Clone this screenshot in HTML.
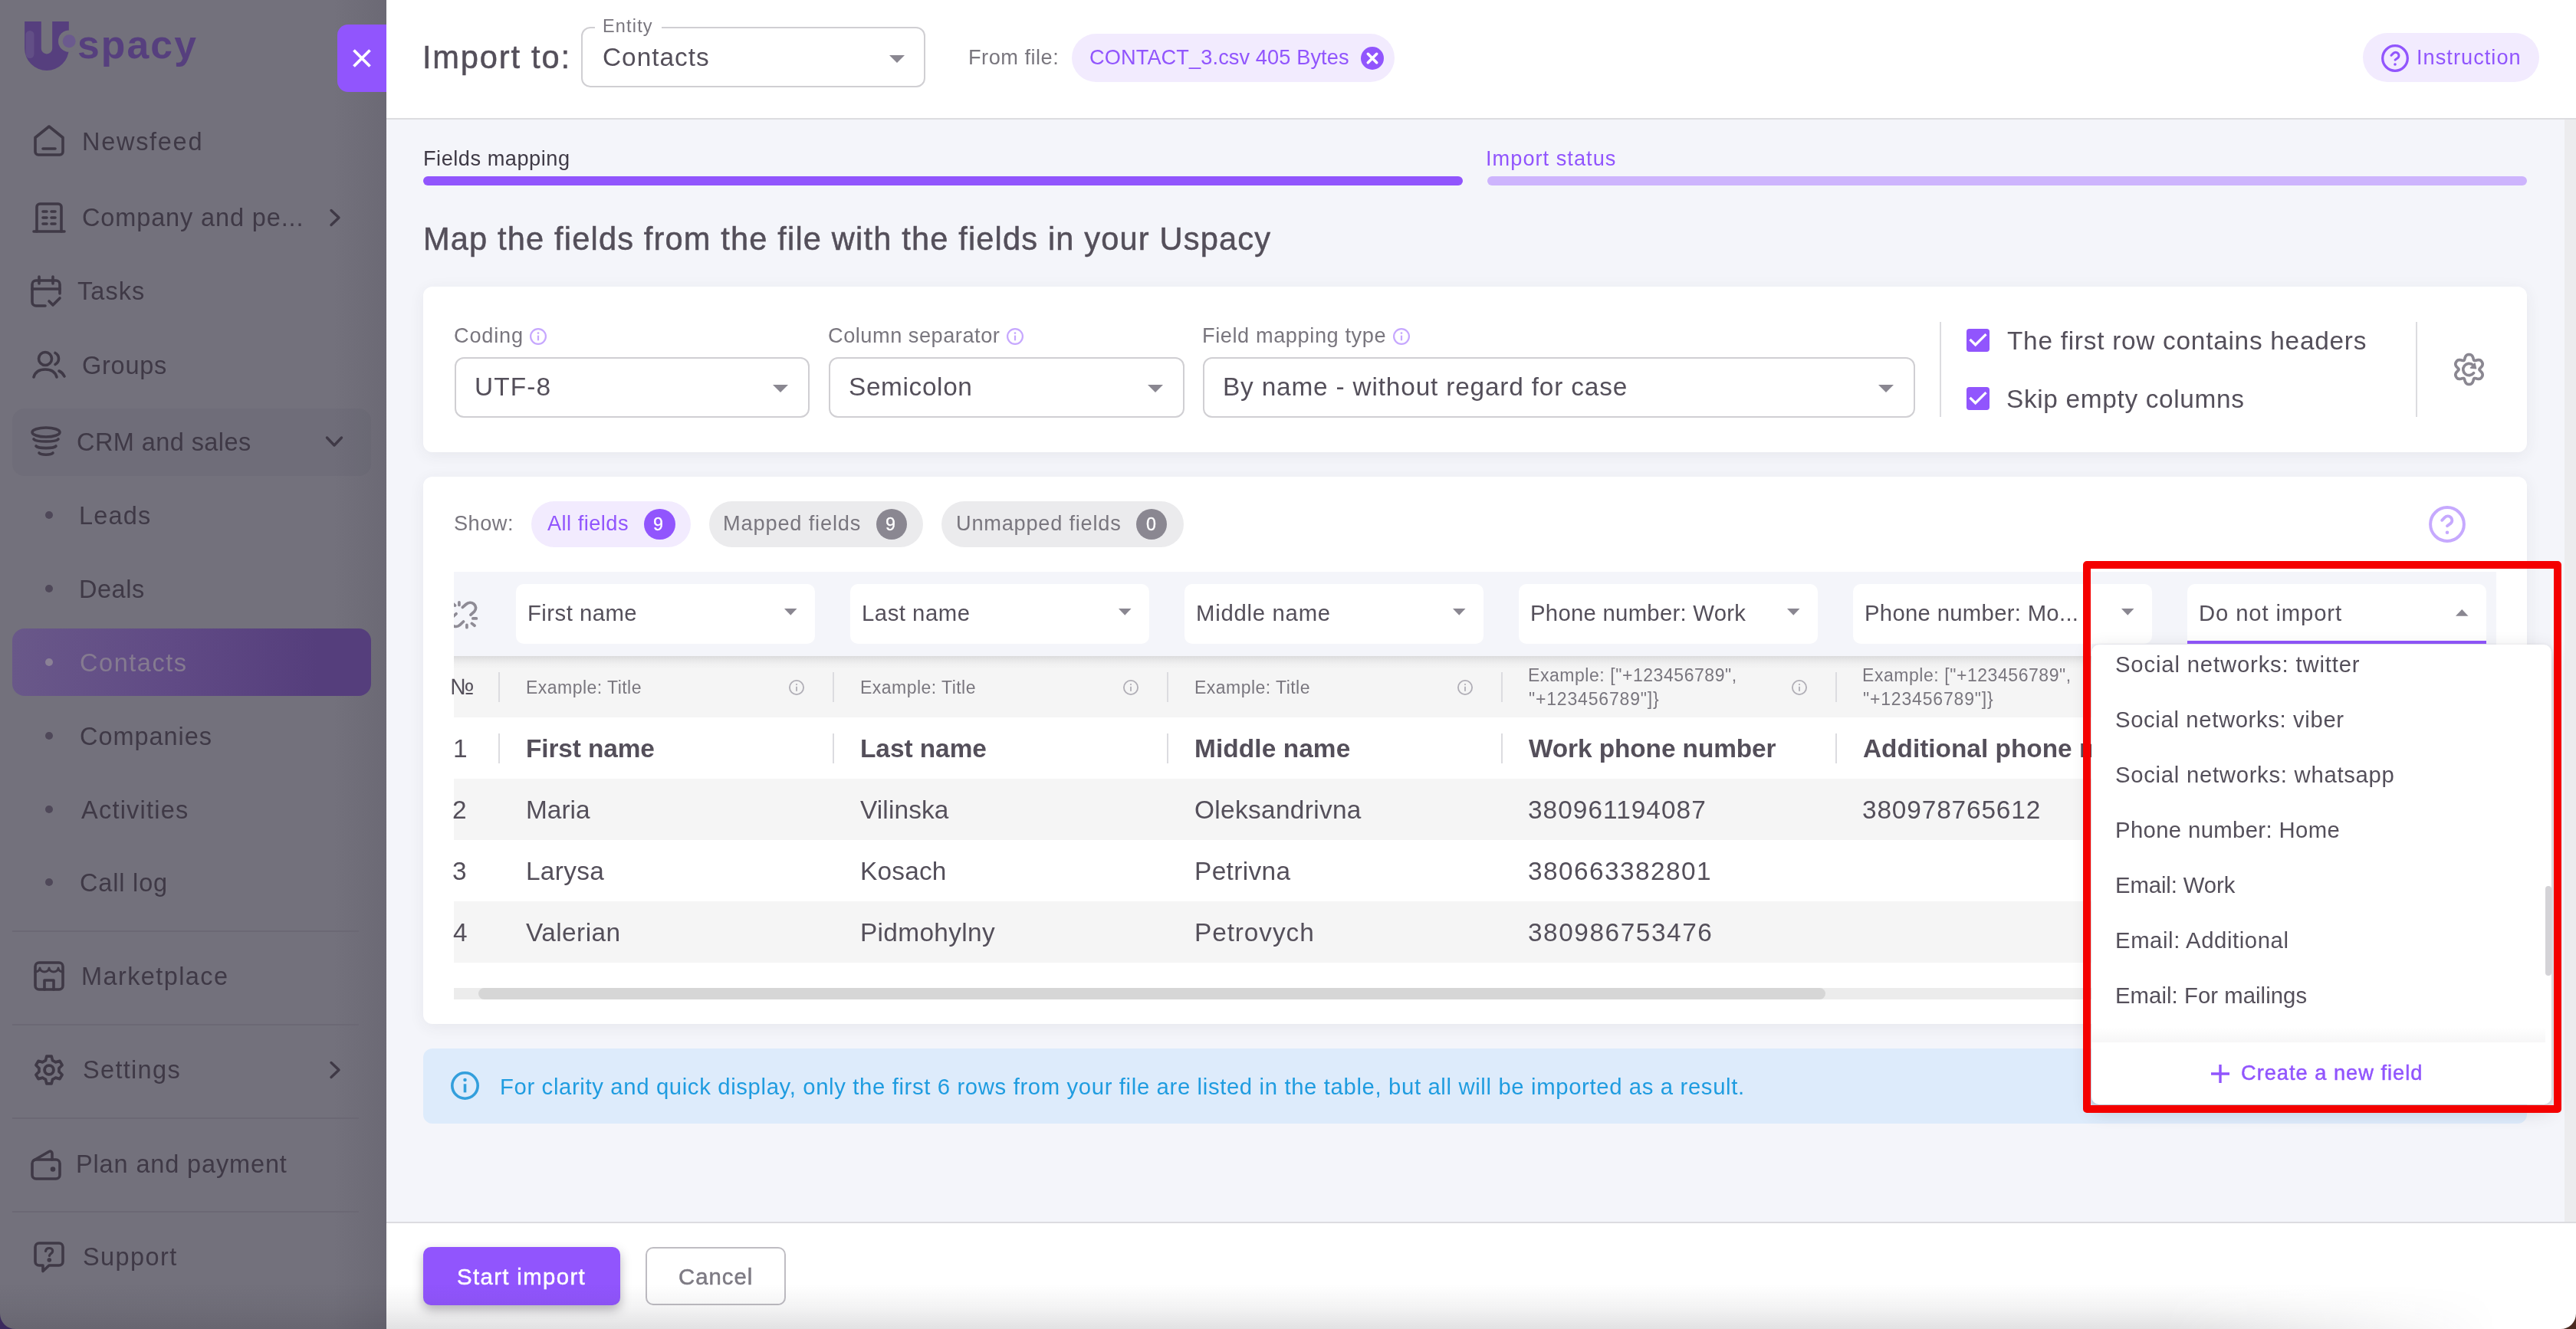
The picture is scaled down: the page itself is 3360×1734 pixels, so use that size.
<!DOCTYPE html>
<html lang="en"><head><meta charset="utf-8"><title>Uspacy import</title><style>
html,body{margin:0;padding:0}
body{width:3360px;height:1734px;position:relative;overflow:hidden;background:#f4f5fa;font-family:"Liberation Sans",sans-serif;}
.a{position:absolute}
.t{position:absolute;white-space:nowrap;line-height:1;will-change:transform}
svg{overflow:visible}
</style></head><body>
<div class="a" style="left:504px;top:0px;width:2856px;height:154px;background:#fff;"></div>
<div class="a" style="left:504px;top:153.5px;width:2856px;height:2px;background:#dcdce0;"></div>
<div class="a" style="left:504px;top:1594px;width:2856px;height:140px;background:#fff;"></div>
<div class="a" style="left:504px;top:1593.5px;width:2856px;height:2px;background:#dcdce0;"></div>
<div class="a" style="left:3345px;top:155.5px;width:15px;height:1438px;background:#ececee;"></div>
<span class="t" id="h_import" style="left:551.16px;top:54.00px;font-size:41.6px;color:#544f5a;-webkit-text-stroke:0.5px #544f5a;letter-spacing:1.812px;">Import to:</span>
<div class="a" style="left:758px;top:35px;width:449px;height:79px;box-sizing:border-box;border:2px solid #d0cfd3;border-radius:12px"></div>
<div class="a" style="left:775.6px;top:33px;width:87.6px;height:6px;background:#fff;"></div>
<span class="t" id="h_entity" style="left:785.71px;top:23.00px;font-size:23.5px;color:#79767e;letter-spacing:1.166px;">Entity</span>
<span class="t" id="h_contacts" style="left:785.94px;top:58.00px;font-size:33.4px;color:#544f5a;letter-spacing:0.978px;">Contacts</span>
<svg class="a" style="left:1160px;top:72px;" width="20" height="10" viewBox="0 0 20 10"><path d="M0 0h20L10 10z" fill="#8a8791"/></svg>
<span class="t" id="h_from" style="left:1263.41px;top:61.00px;font-size:27.2px;color:#79767e;letter-spacing:0.491px;">From file:</span>
<div class="a" style="left:1397.5px;top:43.5px;width:421.5px;height:63.5px;background:#f2ebfe;border-radius:32px;"></div>
<span class="t" id="h_file" style="left:1421.16px;top:61.00px;font-size:27.2px;color:#9155fd;letter-spacing:0.097px;">CONTACT_3.csv 405 Bytes</span>
<svg class="a" style="left:1775.1px;top:60.7px;" width="30" height="30" viewBox="0 0 30 30"><circle cx="15" cy="15" r="15" fill="#9155fd"/><path d="M9.3 9.3l11.4 11.4M20.7 9.3L9.3 20.7" stroke="#fff" stroke-width="3.6" stroke-linecap="round"/></svg>
<div class="a" style="left:3082px;top:43px;width:230px;height:64px;background:#f2ebfe;border-radius:32px;"></div>
<svg class="a" style="left:3106px;top:57.7px;" width="36" height="36" viewBox="0 0 36 36"><circle cx="18" cy="18" r="16.300" fill="none" stroke="#9155fd" stroke-width="3.300"/><path d="M13 14.200l2.600-2.600c1.800-1.700 4.500-1.700 6.200 0 1.700 1.700 1.600 4.400-.200 5.900l-3.500 2.600" fill="none" stroke="#9155fd" stroke-width="3" stroke-linecap="round" stroke-linejoin="round"/><circle cx="18" cy="26" r="1.800" fill="#9155fd"/></svg>
<span class="t" id="h_instr" style="left:3151.87px;top:61.00px;font-size:27.2px;color:#9155fd;letter-spacing:1.028px;">Instruction</span>
<span class="t" id="tab1" style="left:551.85px;top:193.00px;font-size:27.2px;color:#3f3a46;letter-spacing:0.516px;">Fields mapping</span>
<div class="a" style="left:552px;top:230px;width:1356px;height:12px;background:#9155fd;border-radius:6px;"></div>
<span class="t" id="tab2" style="left:1938.49px;top:193.00px;font-size:27.2px;color:#9155fd;letter-spacing:1.021px;">Import status</span>
<div class="a" style="left:1940px;top:230px;width:1356px;height:12px;background:#cdb4fd;border-radius:6px;"></div>
<span class="t" id="title" style="left:551.67px;top:291.00px;font-size:41.6px;color:#544f5a;-webkit-text-stroke:0.5px #544f5a;letter-spacing:1.156px;">Map the fields from the file with the fields in your Uspacy</span>
<div class="a" style="left:552px;top:374px;width:2744px;height:216px;background:#fff;border-radius:12px;box-shadow:0 4px 20px rgba(58,53,65,0.07);"></div>
<span class="t" id="lbl0" style="left:591.62px;top:424.00px;font-size:27.2px;color:#79767e;letter-spacing:0.796px;">Coding</span>
<svg class="a" style="left:691px;top:427.5px;" width="22" height="22" viewBox="0 0 22 22"><circle cx="11" cy="11" r="9.9" fill="none" stroke="#c6a7fe" stroke-width="2.2"/><rect x="9.9" y="9.68" width="2.2" height="6.6" fill="#c6a7fe"/><circle cx="11" cy="6.6" r="1.364" fill="#c6a7fe"/></svg>
<span class="t" id="lbl1" style="left:1080.16px;top:424.00px;font-size:27.2px;color:#79767e;letter-spacing:0.516px;">Column separator</span>
<svg class="a" style="left:1313px;top:427.5px;" width="22" height="22" viewBox="0 0 22 22"><circle cx="11" cy="11" r="9.9" fill="none" stroke="#c6a7fe" stroke-width="2.2"/><rect x="9.9" y="9.68" width="2.2" height="6.6" fill="#c6a7fe"/><circle cx="11" cy="6.6" r="1.364" fill="#c6a7fe"/></svg>
<span class="t" id="lbl2" style="left:1567.77px;top:424.00px;font-size:27.2px;color:#79767e;letter-spacing:0.577px;">Field mapping type</span>
<svg class="a" style="left:1816.7px;top:427.5px;" width="22" height="22" viewBox="0 0 22 22"><circle cx="11" cy="11" r="9.9" fill="none" stroke="#c6a7fe" stroke-width="2.2"/><rect x="9.9" y="9.68" width="2.2" height="6.6" fill="#c6a7fe"/><circle cx="11" cy="6.6" r="1.364" fill="#c6a7fe"/></svg>
<div class="a" style="left:592.5px;top:465.5px;width:463px;height:79px;box-sizing:border-box;border:2px solid #d0cfd3;border-radius:12px"></div>
<span class="t" id="sel0" style="left:619.34px;top:488.00px;font-size:33.4px;color:#544f5a;letter-spacing:1.125px;">UTF-8</span>
<svg class="a" style="left:1008px;top:502px;" width="20" height="10" viewBox="0 0 20 10"><path d="M0 0h20 L10 10z" fill="#8a8791"/></svg>
<div class="a" style="left:1080.5px;top:465.5px;width:464px;height:79px;box-sizing:border-box;border:2px solid #d0cfd3;border-radius:12px"></div>
<span class="t" id="sel1" style="left:1107.22px;top:488.00px;font-size:33.4px;color:#544f5a;letter-spacing:0.630px;">Semicolon</span>
<svg class="a" style="left:1497px;top:502px;" width="20" height="10" viewBox="0 0 20 10"><path d="M0 0h20 L10 10z" fill="#8a8791"/></svg>
<div class="a" style="left:1568.5px;top:465.5px;width:929px;height:79px;box-sizing:border-box;border:2px solid #d0cfd3;border-radius:12px"></div>
<span class="t" id="sel2" style="left:1595.26px;top:488.00px;font-size:33.4px;color:#544f5a;letter-spacing:0.817px;">By name - without regard for case</span>
<svg class="a" style="left:2450px;top:502px;" width="20" height="10" viewBox="0 0 20 10"><path d="M0 0h20 L10 10z" fill="#8a8791"/></svg>
<div class="a" style="left:2529.5px;top:420px;width:2px;height:123.5px;background:#dcdce0;"></div>
<div class="a" style="left:3150.5px;top:420px;width:2px;height:123.5px;background:#dcdce0;"></div>
<svg class="a" style="left:2565px;top:429px;" width="30" height="30" viewBox="0 0 30 30"><rect width="30" height="30" rx="3.700" fill="#9155fd"/><path d="M11.670 23.330L3.330 15L5.680 12.650L11.670 18.620L24.320 5.970L26.670 8.330z" fill="#fff"/></svg>
<svg class="a" style="left:2565px;top:505px;" width="30" height="30" viewBox="0 0 30 30"><rect width="30" height="30" rx="3.700" fill="#9155fd"/><path d="M11.670 23.330L3.330 15L5.680 12.650L11.670 18.620L24.320 5.970L26.670 8.330z" fill="#fff"/></svg>
<span class="t" id="cb1" style="left:2617.89px;top:428.00px;font-size:33.4px;color:#544f5a;letter-spacing:0.726px;">The first row contains headers</span>
<span class="t" id="cb2" style="left:2617.12px;top:504.00px;font-size:33.4px;color:#544f5a;letter-spacing:0.659px;">Skip empty columns</span>
<svg class="a" style="left:3199.5px;top:460px;" width="41" height="44" viewBox="0 0 41 44"><path d="M34.0 22.0 L34.1 22.6 L34.6 23.2 L35.3 23.9 L36.0 24.7 L36.8 25.6 L37.5 26.5 L37.9 27.5 L38.1 28.4 L38.2 29.3 L38.0 30.2 L37.7 31.0 L37.3 31.7 L36.9 32.4 L36.3 33.1 L35.7 33.6 L34.9 34.1 L34.0 34.3 L32.9 34.4 L31.8 34.3 L30.6 34.1 L29.6 33.8 L28.6 33.6 L27.8 33.5 L27.2 33.6 L26.8 34.1 L26.5 34.8 L26.2 35.7 L25.9 36.8 L25.5 37.9 L25.0 39.0 L24.5 39.8 L23.8 40.5 L23.0 41.0 L22.2 41.2 L21.3 41.4 L20.5 41.5 L19.7 41.4 L18.8 41.2 L18.0 41.0 L17.2 40.5 L16.5 39.8 L16.0 39.0 L15.5 37.9 L15.1 36.8 L14.8 35.7 L14.5 34.8 L14.2 34.1 L13.8 33.6 L13.2 33.5 L12.4 33.6 L11.4 33.8 L10.4 34.1 L9.2 34.3 L8.1 34.4 L7.0 34.3 L6.1 34.1 L5.3 33.6 L4.7 33.1 L4.1 32.4 L3.7 31.7 L3.3 31.0 L3.0 30.2 L2.8 29.3 L2.9 28.4 L3.1 27.5 L3.5 26.5 L4.2 25.6 L5.0 24.7 L5.7 23.9 L6.4 23.2 L6.9 22.6 L7.1 22.0 L6.9 21.4 L6.4 20.8 L5.7 20.1 L5.0 19.3 L4.2 18.4 L3.5 17.5 L3.1 16.5 L2.9 15.6 L2.8 14.7 L3.0 13.8 L3.3 13.0 L3.7 12.3 L4.1 11.6 L4.7 10.9 L5.3 10.4 L6.1 9.9 L7.0 9.7 L8.1 9.6 L9.2 9.7 L10.4 9.9 L11.4 10.2 L12.4 10.4 L13.2 10.5 L13.8 10.4 L14.2 9.9 L14.5 9.2 L14.8 8.3 L15.1 7.2 L15.5 6.1 L16.0 5.0 L16.5 4.2 L17.2 3.5 L18.0 3.0 L18.8 2.8 L19.7 2.6 L20.5 2.6 L21.3 2.6 L22.2 2.8 L23.0 3.0 L23.8 3.5 L24.5 4.2 L25.0 5.0 L25.5 6.1 L25.9 7.2 L26.2 8.3 L26.5 9.2 L26.8 9.9 L27.2 10.4 L27.8 10.5 L28.6 10.4 L29.6 10.2 L30.6 9.9 L31.8 9.7 L32.9 9.6 L34.0 9.7 L34.9 9.9 L35.7 10.4 L36.3 10.9 L36.9 11.6 L37.3 12.3 L37.7 13.0 L38.0 13.8 L38.2 14.7 L38.1 15.6 L37.9 16.5 L37.5 17.5 L36.8 18.4 L36.0 19.3 L35.3 20.1 L34.6 20.8 L34.1 21.4z" fill="none" stroke="#8a8791" stroke-width="3.700" stroke-linejoin="round"/><path d="M25.2 15.9 A7.7 7.7 0 1 0 26.6 26.7" fill="none" stroke="#8a8791" stroke-width="3.700" stroke-linecap="round"/><path d="M28 14.200L29.500 20.600L22.500 20z" fill="#8a8791" stroke="#8a8791" stroke-width="1.600" stroke-linejoin="round"/></svg>
<div class="a" style="left:552px;top:622px;width:2744px;height:714px;background:#fff;border-radius:12px;box-shadow:0 4px 20px rgba(58,53,65,0.07);"></div>
<span class="t" id="show" style="left:591.86px;top:669.00px;font-size:27.2px;color:#79767e;letter-spacing:0.489px;">Show:</span>
<div class="a" style="left:693px;top:654px;width:208px;height:60px;background:#f2ebfe;border-radius:30px;"></div>
<span class="t" id="chip0" style="left:713.85px;top:669.00px;font-size:27.2px;color:#9155fd;letter-spacing:0.471px;">All fields</span>
<div class="a" style="left:840.4px;top:663.8px;width:40.4px;height:40.4px;background:#9155fd;border-radius:21px;"></div>
<span class="t" id="chipn0" style="left:852.37px;top:673.00px;font-size:23.3px;color:#fff;-webkit-text-stroke:0.3px #fff;">9</span>
<div class="a" style="left:925px;top:654px;width:279px;height:60px;background:#ebebed;border-radius:30px;"></div>
<span class="t" id="chip1" style="left:943.49px;top:669.00px;font-size:27.2px;color:#79767e;letter-spacing:0.843px;">Mapped fields</span>
<div class="a" style="left:1142.9px;top:663.8px;width:40.4px;height:40.4px;background:#8a8791;border-radius:21px;"></div>
<span class="t" id="chipn1" style="left:1155.27px;top:673.00px;font-size:23.3px;color:#fff;-webkit-text-stroke:0.3px #fff;">9</span>
<div class="a" style="left:1228px;top:654px;width:315.5px;height:60px;background:#ebebed;border-radius:30px;"></div>
<span class="t" id="chip2" style="left:1246.54px;top:669.00px;font-size:27.2px;color:#79767e;letter-spacing:0.764px;">Unmapped fields</span>
<div class="a" style="left:1482px;top:663.8px;width:40.4px;height:40.4px;background:#8a8791;border-radius:21px;"></div>
<span class="t" id="chipn2" style="left:1494.63px;top:673.00px;font-size:23.3px;color:#fff;-webkit-text-stroke:0.3px #fff;">0</span>
<svg class="a" style="left:3168px;top:660px;" width="48" height="48" viewBox="0 0 48 48"><circle cx="24" cy="24" r="21.900" fill="none" stroke="#c6a9fe" stroke-width="4"/><path d="M17.200 18.800l3.600-3.600c2.300-2.200 5.800-2.200 8 0 2.200 2.200 2.100 5.700-.300 7.700l-4.500 3.300" fill="none" stroke="#c6a9fe" stroke-width="3.900" stroke-linecap="round" stroke-linejoin="round"/><circle cx="24" cy="34.700" r="2.300" fill="#c6a9fe"/></svg>
<div class="a" style="left:592px;top:746px;width:2664px;height:560px;overflow:hidden">
<div class="a" style="left:0px;top:110px;width:2664px;height:80px;background:#f5f5f5;"></div>
<div class="a" style="left:0px;top:270px;width:2664px;height:80px;background:#f5f5f5;"></div>
<div class="a" style="left:0px;top:430px;width:2664px;height:80px;background:#f5f5f5;"></div>
<div class="a" style="left:0px;top:0px;width:2664px;height:110px;background:#f4f5fa;"></div>
<div class="a" style="left:0px;top:110px;width:2664px;height:17px;background:linear-gradient(to bottom, rgba(40,40,50,0.125), rgba(40,40,50,0.065) 30%, rgba(40,40,50,0.025) 62%, rgba(40,40,50,0));"></div>
<div class="a" style="left:0px;top:542.5px;width:2664px;height:15.5px;background:#ececec;"></div>
<div class="a" style="left:31.5px;top:542.5px;width:1757px;height:15.5px;background:#d6d6d6;border-radius:8px;"></div>
</div>
<div class="a" style="left:673px;top:762px;width:390px;height:78px;background:#fff;border-radius:10px;"></div>
<span class="t" id="col0" style="left:687.60px;top:785.00px;font-size:29.3px;color:#544f5a;letter-spacing:0.473px;">First name</span>
<svg class="a" style="left:1022.75px;top:794.35px;" width="16.5" height="8.7" viewBox="0 0 16.5 8.7"><path d="M0 0h16.5 L8.25 8.7z" fill="#8a8791"/></svg>
<div class="a" style="left:1109px;top:762px;width:390px;height:78px;background:#fff;border-radius:10px;"></div>
<span class="t" id="col1" style="left:1123.60px;top:785.00px;font-size:29.3px;color:#544f5a;letter-spacing:0.522px;">Last name</span>
<svg class="a" style="left:1458.75px;top:794.35px;" width="16.5" height="8.7" viewBox="0 0 16.5 8.7"><path d="M0 0h16.5 L8.25 8.7z" fill="#8a8791"/></svg>
<div class="a" style="left:1545px;top:762px;width:390px;height:78px;background:#fff;border-radius:10px;"></div>
<span class="t" id="col2" style="left:1559.60px;top:785.00px;font-size:29.3px;color:#544f5a;letter-spacing:0.733px;">Middle name</span>
<svg class="a" style="left:1894.75px;top:794.35px;" width="16.5" height="8.7" viewBox="0 0 16.5 8.7"><path d="M0 0h16.5 L8.25 8.7z" fill="#8a8791"/></svg>
<div class="a" style="left:1981px;top:762px;width:390px;height:78px;background:#fff;border-radius:10px;"></div>
<span class="t" id="col3" style="left:1995.60px;top:785.00px;font-size:29.3px;color:#544f5a;letter-spacing:0.277px;">Phone number: Work</span>
<svg class="a" style="left:2330.75px;top:794.35px;" width="16.5" height="8.7" viewBox="0 0 16.5 8.7"><path d="M0 0h16.5 L8.25 8.7z" fill="#8a8791"/></svg>
<div class="a" style="left:2417px;top:762px;width:390px;height:78px;background:#fff;border-radius:10px;"></div>
<span class="t" id="col4" style="left:2431.60px;top:785.00px;font-size:29.3px;color:#544f5a;letter-spacing:0.300px;">Phone number: Mo...</span>
<svg class="a" style="left:2766.75px;top:794.35px;" width="16.5" height="8.7" viewBox="0 0 16.5 8.7"><path d="M0 0h16.5 L8.25 8.7z" fill="#8a8791"/></svg>
<div class="a" style="left:592px;top:775px;width:40px;height:52px;overflow:hidden">
<svg class="a" style="left:0px;top:0px;" width="40" height="52" viewBox="592 775 40 52"><g fill="none" stroke="#8e8b95" stroke-width="3.700" stroke-linecap="round" stroke-linejoin="round"><path d="M598.900 785.800v3.600M590.500 787.500l3 2.500M603.400 792.400l4.400-3.900c3-2.700 7.300-2.900 10.200-.500 3.100 2.600 3.400 6.800.700 9.800l-4.700 4.400M616.800 806.900h4.600M615.400 813.400l3.600 2.900M608.900 815.400v3.300M604.500 811l-4.600 4.300c-2.900 2.600-7 2.900-10 .600-3.100-2.500-3.400-6.800-.800-9.700l5.900-5.400"/></g></svg>
</div>
<span class="t" id="num" style="left:587.41px;top:881.00px;font-size:29.3px;color:#544f5a;">№</span>
<div class="a" style="left:650px;top:877px;width:2px;height:39px;background:#dcdce0;"></div>
<div class="a" style="left:650px;top:956.5px;width:2px;height:39px;background:#dcdce0;"></div>
<div class="a" style="left:1086px;top:877px;width:2px;height:39px;background:#dcdce0;"></div>
<div class="a" style="left:1086px;top:956.5px;width:2px;height:39px;background:#dcdce0;"></div>
<div class="a" style="left:1522px;top:877px;width:2px;height:39px;background:#dcdce0;"></div>
<div class="a" style="left:1522px;top:956.5px;width:2px;height:39px;background:#dcdce0;"></div>
<div class="a" style="left:1958px;top:877px;width:2px;height:39px;background:#dcdce0;"></div>
<div class="a" style="left:1958px;top:956.5px;width:2px;height:39px;background:#dcdce0;"></div>
<div class="a" style="left:2394px;top:877px;width:2px;height:39px;background:#dcdce0;"></div>
<div class="a" style="left:2394px;top:956.5px;width:2px;height:39px;background:#dcdce0;"></div>
<span class="t" id="ex0" style="left:686.47px;top:886.00px;font-size:23px;color:#79767e;letter-spacing:0.461px;">Example: Title</span>
<span class="t" id="ex1" style="left:1122.47px;top:886.00px;font-size:23px;color:#79767e;letter-spacing:0.461px;">Example: Title</span>
<span class="t" id="ex2" style="left:1558.47px;top:886.00px;font-size:23px;color:#79767e;letter-spacing:0.461px;">Example: Title</span>
<svg class="a" style="left:1028.6px;top:887px;" width="20" height="20" viewBox="0 0 20 20"><circle cx="10" cy="10" r="9.1" fill="none" stroke="#b0aeb6" stroke-width="1.8"/><rect x="9.1" y="8.8" width="1.8" height="6" fill="#b0aeb6"/><circle cx="10" cy="6" r="1.116" fill="#b0aeb6"/></svg>
<svg class="a" style="left:1464.6px;top:887px;" width="20" height="20" viewBox="0 0 20 20"><circle cx="10" cy="10" r="9.1" fill="none" stroke="#b0aeb6" stroke-width="1.8"/><rect x="9.1" y="8.8" width="1.8" height="6" fill="#b0aeb6"/><circle cx="10" cy="6" r="1.116" fill="#b0aeb6"/></svg>
<svg class="a" style="left:1900.6px;top:887px;" width="20" height="20" viewBox="0 0 20 20"><circle cx="10" cy="10" r="9.1" fill="none" stroke="#b0aeb6" stroke-width="1.8"/><rect x="9.1" y="8.8" width="1.8" height="6" fill="#b0aeb6"/><circle cx="10" cy="6" r="1.116" fill="#b0aeb6"/></svg>
<svg class="a" style="left:2336.6px;top:887px;" width="20" height="20" viewBox="0 0 20 20"><circle cx="10" cy="10" r="9.1" fill="none" stroke="#b0aeb6" stroke-width="1.8"/><rect x="9.1" y="8.8" width="1.8" height="6" fill="#b0aeb6"/><circle cx="10" cy="6" r="1.116" fill="#b0aeb6"/></svg>
<span class="t" id="ex3a" style="left:1992.93px;top:870.00px;font-size:23px;color:#79767e;letter-spacing:0.555px;">Example: ["+123456789",</span>
<span class="t" id="ex3b" style="left:1993.84px;top:901.00px;font-size:23px;color:#79767e;letter-spacing:0.823px;">"+123456789"]}</span>
<span class="t" id="ex4a" style="left:2428.93px;top:870.00px;font-size:23px;color:#79767e;letter-spacing:0.555px;">Example: ["+123456789",</span>
<span class="t" id="ex4b" style="left:2429.84px;top:901.00px;font-size:23px;color:#79767e;letter-spacing:0.823px;">"+123456789"]}</span>
<span class="t" id="rn0" style="left:590.56px;top:960.00px;font-size:33.4px;color:#544f5a;">1</span>
<span class="t" id="c0_0" style="left:686.19px;top:960.00px;font-size:33.4px;color:#544f5a;font-weight:700;letter-spacing:-0.113px;">First name</span>
<span class="t" id="c0_1" style="left:1122.19px;top:960.00px;font-size:33.4px;color:#544f5a;font-weight:700;letter-spacing:-0.039px;">Last name</span>
<span class="t" id="c0_2" style="left:1558.19px;top:960.00px;font-size:33.4px;color:#544f5a;font-weight:700;letter-spacing:0.098px;">Middle name</span>
<span class="t" id="c0_3" style="left:1994.03px;top:960.00px;font-size:33.4px;color:#544f5a;font-weight:700;letter-spacing:-0.092px;">Work phone number</span>
<span class="t" id="c0_4" style="left:2429.87px;top:960.00px;font-size:33.4px;color:#544f5a;font-weight:700;">Additional phone number</span>
<span class="t" id="rn1" style="left:590.06px;top:1040.00px;font-size:33.4px;color:#544f5a;">2</span>
<span class="t" id="c1_0" style="left:685.79px;top:1040.00px;font-size:33.4px;color:#544f5a;letter-spacing:-0.003px;">Maria</span>
<span class="t" id="c1_1" style="left:1122.12px;top:1040.00px;font-size:33.4px;color:#544f5a;letter-spacing:0.137px;">Vilinska</span>
<span class="t" id="c1_2" style="left:1557.67px;top:1040.00px;font-size:33.4px;color:#544f5a;letter-spacing:0.334px;">Oleksandrivna</span>
<span class="t" id="c1_3" style="left:1993.42px;top:1040.00px;font-size:33.4px;color:#544f5a;letter-spacing:1.031px;">380961194087</span>
<span class="t" id="c1_4" style="left:2429.42px;top:1040.00px;font-size:33.4px;color:#544f5a;letter-spacing:0.856px;">380978765612</span>
<span class="t" id="rn2" style="left:590.47px;top:1120.00px;font-size:33.4px;color:#544f5a;">3</span>
<span class="t" id="c2_0" style="left:685.79px;top:1120.00px;font-size:33.4px;color:#544f5a;letter-spacing:0.303px;">Larysa</span>
<span class="t" id="c2_1" style="left:1121.79px;top:1120.00px;font-size:33.4px;color:#544f5a;letter-spacing:0.201px;">Kosach</span>
<span class="t" id="c2_2" style="left:1557.79px;top:1120.00px;font-size:33.4px;color:#544f5a;letter-spacing:0.361px;">Petrivna</span>
<span class="t" id="c2_3" style="left:1993.42px;top:1120.00px;font-size:33.4px;color:#544f5a;letter-spacing:1.429px;">380663382801</span>
<span class="t" id="rn3" style="left:590.97px;top:1200.00px;font-size:33.4px;color:#544f5a;">4</span>
<span class="t" id="c3_0" style="left:686.12px;top:1200.00px;font-size:33.4px;color:#544f5a;letter-spacing:0.431px;">Valerian</span>
<span class="t" id="c3_1" style="left:1121.79px;top:1200.00px;font-size:33.4px;color:#544f5a;letter-spacing:0.336px;">Pidmohylny</span>
<span class="t" id="c3_2" style="left:1557.79px;top:1200.00px;font-size:33.4px;color:#544f5a;letter-spacing:0.909px;">Petrovych</span>
<span class="t" id="c3_3" style="left:1993.42px;top:1200.00px;font-size:33.4px;color:#544f5a;letter-spacing:1.548px;">380986753476</span>
<div class="a" style="left:552px;top:1368px;width:2744px;height:98px;background:#ddebfb;border-radius:12px;"></div>
<svg class="a" style="left:587.5px;top:1397.7px;" width="37" height="37" viewBox="0 0 37 37"><circle cx="18.5" cy="18.5" r="16.7" fill="none" stroke="#339fdc" stroke-width="3.6"/><rect x="16.7" y="16.28" width="3.6" height="11.1" fill="#339fdc"/><circle cx="18.5" cy="11.1" r="2.232" fill="#339fdc"/></svg>
<span class="t" id="banner" style="left:651.60px;top:1403.00px;font-size:29.3px;color:#1f9ce0;letter-spacing:0.633px;">For clarity and quick display, only the first 6 rows from your file are listed in the table, but all will be imported as a result.</span>
<div class="a" style="left:552px;top:1627px;width:257px;height:75.5px;background:#9155fd;border-radius:10px;box-shadow:0 6px 14px rgba(58,53,65,0.35);"></div>
<span class="t" id="btn1" style="left:595.67px;top:1651.00px;font-size:29.3px;color:#fff;-webkit-text-stroke:0.5px #fff;letter-spacing:1.394px;">Start import</span>
<div class="a" style="left:841.5px;top:1627px;width:183.5px;height:75.5px;box-sizing:border-box;border:2px solid #bfbdc3;border-radius:10px"></div>
<span class="t" id="btn2" style="left:885.05px;top:1651.00px;font-size:29.3px;color:#7d7a83;-webkit-text-stroke:0.5px #7d7a83;letter-spacing:1.033px;">Cancel</span>
<div class="a" style="left:0px;top:0px;width:504px;height:1734px;background:#73717c;"></div>
<div class="a" style="left:434px;top:0px;width:70px;height:1734px;background:linear-gradient(to right, rgba(40,36,50,0), rgba(40,36,50,0.10));"></div>
<svg class="a" style="left:31px;top:27px;" width="62" height="66" viewBox="0 0 62 66"><path d="M1.1 1.100H22.800V36.200A7.200 7.200 0 0 0 37.200 36.200V1.100H58.800V36.200A28.850 28.850 0 0 1 1.100 36.200z" fill="#563f7e"/><rect x="2.500" y="13" width="11" height="36" rx="5.500" fill="#6d5d8c" opacity="0.550"/><circle cx="59.200" cy="26.650" r="14.200" fill="#73717c"/><circle cx="59.200" cy="26.650" r="8.500" fill="#6b5a8e"/></svg>
<span class="t" id="logo" style="left:100.82px;top:33.00px;font-size:51.7px;color:#563f7e;font-weight:700;letter-spacing:2.088px;">spacy</span>
<div class="a" style="left:16px;top:533px;width:468px;height:88px;background:rgba(60,56,72,0.055);border-radius:16px;"></div>
<div class="a" style="left:16px;top:820px;width:468px;height:88px;background:linear-gradient(to right, #695889, #604a85 45%, #553e7c 85%);border-radius:16px;"></div>
<span class="t" id="nav0" style="left:107.33px;top:169.00px;font-size:32.5px;color:#3f3946;letter-spacing:1.707px;">Newsfeed</span>
<span class="t" id="nav1" style="left:107.45px;top:268.00px;font-size:32.5px;color:#3f3946;letter-spacing:0.868px;">Company and pe...</span>
<span class="t" id="nav2" style="left:100.91px;top:364.00px;font-size:32.5px;color:#3f3946;letter-spacing:1.047px;">Tasks</span>
<span class="t" id="nav3" style="left:107.47px;top:461.00px;font-size:32.5px;color:#3f3946;letter-spacing:0.754px;">Groups</span>
<span class="t" id="nav4" style="left:99.99px;top:561.00px;font-size:32.5px;color:#3f3946;letter-spacing:0.417px;">CRM and sales</span>
<span class="t" id="nav5" style="left:102.97px;top:657.00px;font-size:32.5px;color:#3f3946;letter-spacing:1.159px;">Leads</span>
<div class="a" style="left:59px;top:666.8px;width:10px;height:10px;background:#4f4859;border-radius:5px;"></div>
<span class="t" id="nav6" style="left:102.97px;top:753.00px;font-size:32.5px;color:#3f3946;letter-spacing:0.527px;">Deals</span>
<div class="a" style="left:59px;top:762.8px;width:10px;height:10px;background:#4f4859;border-radius:5px;"></div>
<span class="t" id="nav7" style="left:103.99px;top:849.00px;font-size:32.5px;color:#857b90;letter-spacing:1.546px;">Contacts</span>
<div class="a" style="left:59px;top:859px;width:10px;height:10px;background:#8b8196;border-radius:5px;"></div>
<span class="t" id="nav8" style="left:103.99px;top:945.00px;font-size:32.5px;color:#3f3946;letter-spacing:0.962px;">Companies</span>
<div class="a" style="left:59px;top:954.6px;width:10px;height:10px;background:#4f4859;border-radius:5px;"></div>
<span class="t" id="nav9" style="left:105.58px;top:1041.00px;font-size:32.5px;color:#3f3946;letter-spacing:1.234px;">Activities</span>
<div class="a" style="left:59px;top:1050.7px;width:10px;height:10px;background:#4f4859;border-radius:5px;"></div>
<span class="t" id="nav10" style="left:103.99px;top:1136.00px;font-size:32.5px;color:#3f3946;letter-spacing:0.816px;">Call log</span>
<div class="a" style="left:59px;top:1146.3px;width:10px;height:10px;background:#4f4859;border-radius:5px;"></div>
<span class="t" id="nav11" style="left:106.43px;top:1258.00px;font-size:32.5px;color:#3f3946;letter-spacing:1.398px;">Marketplace</span>
<span class="t" id="nav12" style="left:107.62px;top:1380.00px;font-size:32.5px;color:#3f3946;letter-spacing:1.316px;">Settings</span>
<span class="t" id="nav13" style="left:98.97px;top:1503.00px;font-size:32.5px;color:#3f3946;letter-spacing:0.861px;">Plan and payment</span>
<span class="t" id="nav14" style="left:107.62px;top:1624.00px;font-size:32.5px;color:#3f3946;letter-spacing:1.402px;">Support</span>
<div class="a" style="left:16px;top:1213.5px;width:452px;height:2px;background:#6b6874;"></div>
<div class="a" style="left:16px;top:1335.5px;width:452px;height:2px;background:#6b6874;"></div>
<div class="a" style="left:16px;top:1458px;width:452px;height:2px;background:#6b6874;"></div>
<div class="a" style="left:16px;top:1580px;width:452px;height:2px;background:#6b6874;"></div>
<svg class="a" style="left:430px;top:273px;" width="14" height="22" viewBox="0 0 14 22"><g fill="none" stroke="#3f3946" stroke-width="3.4" stroke-linecap="round" stroke-linejoin="round"><path d="M2 1.500l10 9.500-10 9.500"/></g></svg>
<svg class="a" style="left:430px;top:1385px;" width="14" height="22" viewBox="0 0 14 22"><g fill="none" stroke="#3f3946" stroke-width="3.4" stroke-linecap="round" stroke-linejoin="round"><path d="M2 1.500l10 9.500-10 9.500"/></g></svg>
<svg class="a" style="left:425px;top:569px;" width="22" height="14" viewBox="0 0 22 14"><g fill="none" stroke="#3f3946" stroke-width="3.4" stroke-linecap="round" stroke-linejoin="round"><path d="M1.500 2l9.500 10 9.500-10"/></g></svg>
<svg class="a" style="left:44px;top:162.5px;" width="40" height="41" viewBox="0 0 40 41"><g fill="none" stroke="#3f3946" stroke-width="3.6" stroke-linecap="round" stroke-linejoin="round"><path d="M2 16.500L20 2l18 14.500V35a4 4 0 0 1-4 4H6a4 4 0 0 1-4-4z"/><path d="M12 31h16"/></g></svg>
<svg class="a" style="left:42px;top:264px;" width="44" height="40" viewBox="0 0 44 40"><g fill="none" stroke="#3f3946" stroke-width="3.6" stroke-linecap="round" stroke-linejoin="round"><path d="M6 38V6a4 4 0 0 1 4-4h24a4 4 0 0 1 4 4v32"/><path d="M2 38h40"/><path d="M14 12h5M25 12h5M14 20h5M25 20h5M14 28h5M25 28h5"/></g></svg>
<svg class="a" style="left:40px;top:359px;" width="40" height="42" viewBox="0 0 40 42"><g fill="none" stroke="#3f3946" stroke-width="3.6" stroke-linecap="round" stroke-linejoin="round"><path d="M38 24V12a5 5 0 0 0-5-5H7a5 5 0 0 0-5 5v23a5 5 0 0 0 5 5h12"/><path d="M2 18h36M11 2v9M29 2v9"/><path d="M24 34l5 5 9-9"/></g></svg>
<svg class="a" style="left:42px;top:457px;" width="44" height="37" viewBox="0 0 44 37"><g fill="none" stroke="#3f3946" stroke-width="3.6" stroke-linecap="round" stroke-linejoin="round"><circle cx="17" cy="11" r="8.500"/><path d="M2 35c2-7 8-10 15-10s13 3 15 10"/><path d="M30 3.500a8.500 8.500 0 0 1 0 15"/><path d="M35 27c3.500 1.500 5.500 4 7 7"/></g></svg>
<svg class="a" style="left:40px;top:556px;" width="40" height="40" viewBox="0 0 40 40"><g fill="none" stroke="#3f3946" stroke-width="3.6" stroke-linecap="round" stroke-linejoin="round"><ellipse cx="20" cy="8" rx="18" ry="6"/><path d="M4 17c3 4 29 4 32 0"/><path d="M7 26c3 3.500 23 3.500 26 0"/><path d="M11 35c3 3 15 3 18 0"/></g></svg>
<svg class="a" style="left:44px;top:1254px;" width="40" height="39" viewBox="0 0 40 39"><g fill="none" stroke="#3f3946" stroke-width="3.6" stroke-linecap="round" stroke-linejoin="round"><rect x="2" y="2" width="36" height="35" rx="5"/><path d="M2 14c3 0 6-2 6-5 0 3 3 5 6 5s6-2 6-5c0 3 3 5 6 5s6-2 6-5c0 3 3 5 6 5" stroke-width="3"/><path d="M14 37V25h12v12"/></g></svg>
<svg class="a" style="left:44px;top:1376px;" width="40" height="40" viewBox="0 0 40 40"><g fill="none" stroke="#3f3946" stroke-width="3.7" stroke-linecap="round" stroke-linejoin="round"><path d="M15.40 7.73L16.90 2.07L23.10 2.07L24.60 7.73A13.1 13.1 0 0 1 28.32 9.88L33.98 8.35L37.08 13.72L32.92 17.85A13.1 13.1 0 0 1 32.92 22.15L37.08 26.28L33.98 31.65L28.32 30.12A13.1 13.1 0 0 1 24.60 32.27L23.10 37.93L16.90 37.93L15.40 32.27A13.1 13.1 0 0 1 11.68 30.12L6.02 31.65L2.92 26.28L7.08 22.15A13.1 13.1 0 0 1 7.08 17.85L2.92 13.72L6.02 8.35L11.68 9.88A13.1 13.1 0 0 1 15.40 7.73z"/><circle cx="20" cy="20" r="5.900" stroke-width="3.900"/></g></svg>
<svg class="a" style="left:40px;top:1500px;" width="40" height="40" viewBox="0 0 40 40"><g fill="none" stroke="#3f3946" stroke-width="3.6" stroke-linecap="round" stroke-linejoin="round"><rect x="2" y="13" width="36" height="25" rx="5"/><path d="M4 14L24 2.500c2-1 4 0 4 2.500v8"/><circle cx="29" cy="25.500" r="1.500" fill="#3f3946"/></g></svg>
<svg class="a" style="left:44px;top:1620px;" width="40" height="41" viewBox="0 0 40 41"><g fill="none" stroke="#3f3946" stroke-width="3.6" stroke-linecap="round" stroke-linejoin="round"><path d="M7 2h26a5 5 0 0 1 5 5v19a5 5 0 0 1-5 5H20l-8 7.500V31H7a5 5 0 0 1-5-5V7a5 5 0 0 1 5-5z"/><path d="M15.500 12.500c.500-3 2.500-4 4.700-4 2.500 0 4.500 1.500 4.500 3.800 0 3-4 3.200-4.300 6.200" stroke-width="3.2"/><circle cx="20.300" cy="24" r="1" fill="#3f3946"/></g></svg>
<div class="a" style="left:440px;top:32px;width:64px;height:88px;background:#9155fd;border-radius:14px 0 0 14px"></div>
<svg class="a" style="left:460px;top:64px;" width="24" height="24" viewBox="0 0 24 24"><path d="M1.500 1.500l21 21M22.500 1.500l-21 21" stroke="#fff" stroke-width="3.800" stroke-linecap="butt"/></svg>
<div class="a" style="left:2853px;top:762px;width:390px;height:78px;background:#fff;border-radius:10px 10px 0 0;box-sizing:border-box;border-bottom:4.500px solid #9155fd"></div>
<span class="t" id="col5" style="left:2868.04px;top:785.00px;font-size:29.3px;color:#544f5a;letter-spacing:0.852px;">Do not import</span>
<svg class="a" style="left:3202.75px;top:795.05px;" width="16.5" height="8.7" viewBox="0 0 16.5 8.7"><path d="M0 8.7h16.5 L8.25 0z" fill="#8a8791"/></svg>
<div class="a" style="left:2728px;top:840.5px;width:600px;height:600px;background:#fff;border-radius:10px;box-shadow:0 8px 24px rgba(58,53,65,0.22), 0 2px 6px rgba(58,53,65,0.12)"></div>
<span class="t" id="opt0" style="left:2758.87px;top:852.00px;font-size:29.3px;color:#544f5a;letter-spacing:0.828px;">Social networks: twitter</span>
<span class="t" id="opt1" style="left:2758.87px;top:924.00px;font-size:29.3px;color:#544f5a;letter-spacing:0.625px;">Social networks: viber</span>
<span class="t" id="opt2" style="left:2758.87px;top:996.00px;font-size:29.3px;color:#544f5a;letter-spacing:0.710px;">Social networks: whatsapp</span>
<span class="t" id="opt3" style="left:2758.60px;top:1068.00px;font-size:29.3px;color:#544f5a;letter-spacing:0.358px;">Phone number: Home</span>
<span class="t" id="opt4" style="left:2758.60px;top:1140.00px;font-size:29.3px;color:#544f5a;letter-spacing:-0.100px;">Email: Work</span>
<span class="t" id="opt5" style="left:2758.60px;top:1212.00px;font-size:29.3px;color:#544f5a;letter-spacing:0.588px;">Email: Additional</span>
<span class="t" id="opt6" style="left:2758.60px;top:1284.00px;font-size:29.3px;color:#544f5a;letter-spacing:0.056px;">Email: For mailings</span>
<div class="a" style="left:3320px;top:1156px;width:8px;height:117px;background:#d4d3d7;border-radius:4px;"></div>
<div class="a" style="left:2728px;top:1340px;width:592px;height:20px;background:linear-gradient(to bottom, rgba(58,53,65,0), rgba(58,53,65,0.045));"></div>
<svg class="a" style="left:2884px;top:1388.5px;" width="24" height="24" viewBox="0 0 24 24"><path d="M12 0v24M0 12h24" stroke="#9155fd" stroke-width="3.400"/></svg>
<span class="t" id="create" style="left:2922.62px;top:1386.00px;font-size:27.2px;color:#9155fd;-webkit-text-stroke:0.5px #9155fd;letter-spacing:1.011px;">Create a new field</span>
<div class="a" style="left:2716.5px;top:732px;width:624px;height:720px;box-sizing:border-box;border:10px solid #f40000;border-radius:5px"></div>
<div class="a" style="left:0px;top:1676px;width:3360px;height:58px;background:linear-gradient(to bottom, rgba(30,30,40,0), rgba(30,30,40,0.05) 50%, rgba(30,30,40,0.13));-webkit-mask-image:linear-gradient(to right,#000 84%,transparent 97%);mask-image:linear-gradient(to right,#000 84%,transparent 97%);"></div>
<svg class="a" style="left:0px;top:1714px;" width="20" height="20" viewBox="0 0 20 20"><path d="M0 0v20h20A20 20 0 0 1 0 0z" fill="#3b2a5e"/></svg>
<svg class="a" style="left:3340px;top:1714px;" width="20" height="20" viewBox="0 0 20 20"><path d="M20 0v20H0A20 20 0 0 0 20 0z" fill="#4a2a20"/></svg>
</body></html>
